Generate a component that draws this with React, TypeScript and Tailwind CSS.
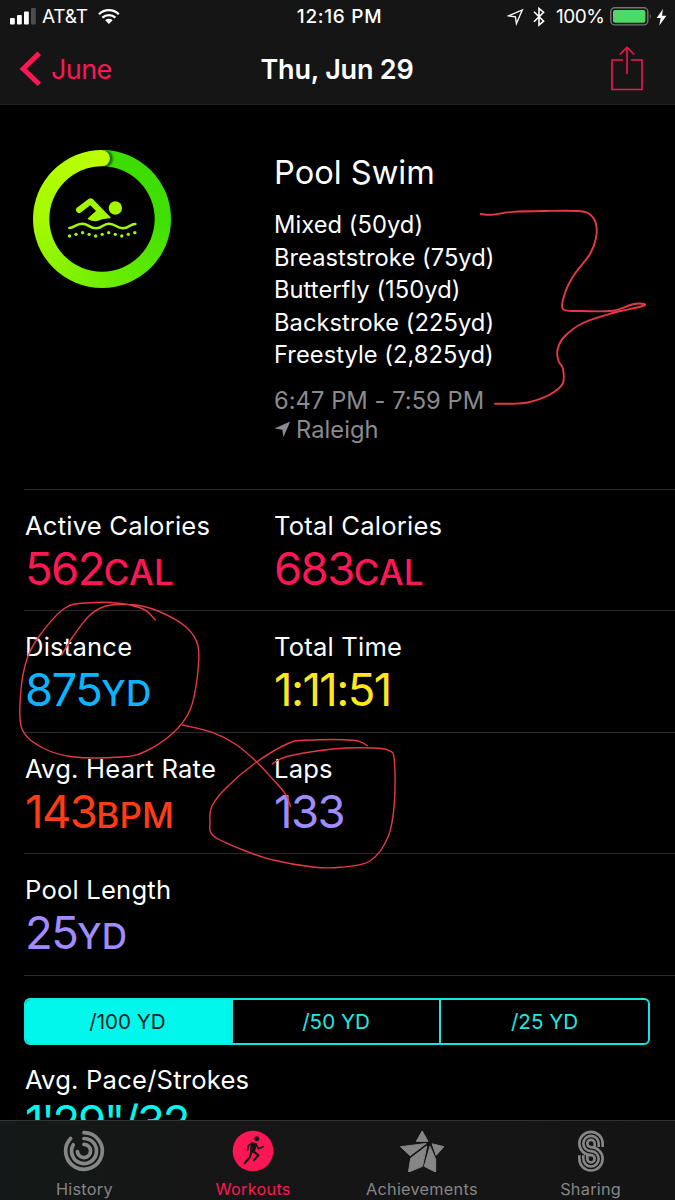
type Point = [number, number];

const strokes = [
  { name: "Mixed", yards: "50" },
  { name: "Breaststroke", yards: "75" },
  { name: "Butterfly", yards: "150" },
  { name: "Backstroke", yards: "225" },
  { name: "Freestyle", yards: "2,825" },
];

const rows = [
  [
    { label: "Active Calories", value: "562", unit: "CAL", color: "text-[#ff1654]" },
    { label: "Total Calories", value: "683", unit: "CAL", color: "text-[#ff1654]" },
  ],
  [
    { label: "Distance", value: "875", unit: "YD", color: "text-[#0ab4ff]" },
    { label: "Total Time", value: "1:11:51", unit: "", color: "text-[#ffe620]" },
  ],
  [
    { label: "Avg. Heart Rate", value: "143", unit: "BPM", color: "text-[#ff3c14]" },
    { label: "Laps", value: "133", unit: "", color: "text-[#a08cff]" },
  ],
  [{ label: "Pool Length", value: "25", unit: "YD", color: "text-[#a08cff]" }],
];

// freehand marker lines drawn over the page
const bracket: Point[] = [
  [480.7, 214], [491.7, 214.7], [513, 211.9], [545, 211], [578, 211], [590, 214.5], [596, 224],
  [596, 238], [590, 254], [574, 275], [565, 293], [562.9, 309], [580, 311], [613, 310.7],
  [632, 304.5], [644, 304], [641, 306.5], [613, 313], [583, 323], [564, 337], [557.5, 350],
  [558.5, 361], [563, 369], [562.5, 384], [549, 395], [528, 402.5], [512, 403.7], [495, 403.7],
];
const distanceLoop: Point[] = [
  [61.7, 655], [72, 638], [89, 616], [106, 606], [133, 604.8], [158, 611], [186, 627],
  [198, 646], [197.3, 677], [190, 710], [173, 733], [144, 752], [121, 757], [74, 757],
  [43, 748], [22, 729], [20.7, 693], [27, 659], [40, 635], [65, 608], [90, 602.7],
  [121, 603.5], [144, 609.5], [155.3, 620],
];
const connector: Point[] = [
  [182.7, 725], [213, 732.7], [236, 744.5], [256.7, 762], [278, 785], [286, 795], [290.7, 806.7],
];
const lapsLoop: Point[] = [
  [272.3, 764], [287, 756.5], [333, 749], [373, 748], [389, 750.5], [394.3, 760], [394.3, 804],
  [388, 837], [370, 861], [340, 867.3], [313, 867], [273, 860], [243, 850], [213.5, 836],
  [210, 822], [212, 806], [227, 787], [256.7, 762], [288, 743.5], [306, 740.3], [353, 740.3],
  [367.3, 745.7],
];

function smooth(pts: Point[]) {
  let d = `M${pts[0][0]} ${pts[0][1]}`;
  for (let i = 0; i < pts.length - 1; i++) {
    const p0 = pts[i - 1] ?? pts[i];
    const p1 = pts[i];
    const p2 = pts[i + 1];
    const p3 = pts[i + 2] ?? p2;
    d += `C${p1[0] + (p2[0] - p0[0]) / 6} ${p1[1] + (p2[1] - p0[1]) / 6} ${
      p2[0] - (p3[0] - p1[0]) / 6
    } ${p2[1] - (p3[1] - p1[1]) / 6} ${p2[0]} ${p2[1]}`;
  }
  return d;
}

function StatusBar() {
  return (
    <div className="flex h-[34px] items-center justify-between pl-[10px] pr-[8px] text-[19px]">
      <div className="flex w-[200px] items-center">
        <svg width="26" height="34" fill="#fff">
          <rect x="0" y="18" width="4.8" height="6.5" rx="1" />
          <rect x="7" y="15" width="4.8" height="9.5" rx="1" />
          <rect x="14" y="11.5" width="4.8" height="13" rx="1" />
          <rect x="21" y="8" width="4.8" height="16.5" rx="1" fill="#4c4c4c" />
        </svg>
        <span className="ml-[6px] w-[56px] pt-px tracking-[-0.2px]">AT&amp;T</span>
        <svg width="22" height="34" viewBox="0 0 22 34" fill="none" stroke="#fff" strokeWidth="2.3">
          <path d="M1 14.2A14.2 14.2 0 0 1 20.8 14.2" />
          <path d="M4.4 17.7A9.4 9.4 0 0 1 17.4 17.7" />
          <path d="M7.2 20.3A5.4 5.4 0 0 1 14.6 20.3L10.9 24Z" fill="#fff" stroke="none" />
        </svg>
      </div>
      <span className="ml-[2px] pt-px font-medium tracking-[0.7px]">12:16 PM</span>
      <div className="flex w-[200px] items-center justify-end">
        <svg width="17" height="34" viewBox="0 0 17 34" fill="none" stroke="#fff" strokeWidth="1.3">
          <path d="M1.5 15.8L15.3 9.9L9.4 23.6L8.4 16.8Z" />
        </svg>
        <svg className="ml-[9px]" width="12" height="34" viewBox="0 0 12 34" fill="none" stroke="#fff" strokeWidth="1.6">
          <path d="M1 11.8L10.6 21.2L6 25V8.5L10.6 12.3L1 21.8" />
        </svg>
        <span className="ml-[11px] w-[54px] pt-px tracking-[-0.5px]">100%</span>
        <svg width="43" height="34" viewBox="0 0 43 34">
          <rect x="0.8" y="7.7" width="37" height="17.2" rx="4" fill="none" stroke="#747474" strokeWidth="1.4" />
          <rect x="3" y="10" width="32.4" height="12.7" rx="2" fill="#4cd964" />
          <path d="M39.8 13.5q2 2.8 0 5.6z" fill="#747474" />
        </svg>
        <svg className="ml-[3px]" width="11" height="34" viewBox="0 0 11 34" fill="#fff">
          <path d="M7 9L0.6 18H4.6L3.3 25.5L10.4 15.7H6Z" />
        </svg>
      </div>
    </div>
  );
}

function Header() {
  return (
    <header className="h-[105px] border-b border-[#222] bg-[#151515]">
      <StatusBar />
      <div className="flex h-[70px] items-center justify-between pl-[20px] pr-[31px] text-[27px]">
        <div className="flex w-[150px] items-center text-[#ff1654]">
          <svg width="22" height="70" viewBox="0 0 22 70" fill="none" stroke="currentColor" strokeWidth="5">
            <path d="M19.2 19.4L3.2 34.8L19.2 50.2" />
          </svg>
          <span className="ml-[9px] pt-[2px] tracking-[-0.6px]">June</span>
        </div>
        <span className="ml-[10px] pt-[2px] font-semibold tracking-[-0.2px]">Thu, Jun 29</span>
        <div className="flex w-[150px] justify-end">
          <svg width="34" height="70" viewBox="0 0 34 70" fill="none" stroke="#f01850" strokeWidth="1.6">
            <path d="M13 26H2V55.5H32V26H21" />
            <path d="M17 40V13.5M9.8 20.5L17 13.3L24.2 20.5" />
          </svg>
        </div>
      </div>
    </header>
  );
}

function WorkoutRing() {
  return (
    <div className="ml-[33px] size-[138px] rounded-full bg-[conic-gradient(#3ddc00,#3fe000_25%,#70ee00_50%,#a5fa00_75%,#bcff00)]">
      <svg width="138" height="138" viewBox="39 30 414 414">
        <defs>
          <radialGradient id="capShade">
            <stop offset="0.7" stopColor="#0a5000" stopOpacity="0.8" />
            <stop offset="1" stopColor="#0a5000" stopOpacity="0" />
          </radialGradient>
          <clipPath id="ringClip">
            <path d="M246 31a206 206 0 0 1 90 20v129h-90z" />
          </clipPath>
        </defs>
        <circle cx="251" cy="56" r="32" fill="url(#capShade)" clipPath="url(#ringClip)" />
        <circle cx="246" cy="55" r="24" fill="#bcff00" />
        <circle cx="246" cy="237" r="158" fill="#000" />
        <g fill="#a4f800" stroke="#a4f800" strokeLinecap="round" strokeLinejoin="round">
          <circle cx="286" cy="204" r="20" stroke="none" />
          <path d="M177 210L211 184" strokeWidth="18" fill="none" />
          <path d="M216 178L270 233Q248 234 238 239Q222 245 205 236L231 213L210 192Z" strokeWidth="4" />
          <path d="M148 264C163 264 166 251 187 251C205 251 208 265 228 265C247 265 248 251 267 251C287 251 289 265 308 265C328 265 329 252 346 252" fill="none" strokeWidth="7.5" />
        </g>
        <g fill="#a4f800">
          {[288, 283, 278, 283, 288, 283, 278, 283, 288, 283, 278].map((y, i) => (
            <circle key={i} cx={148.5 + i * 19.6} cy={y} r="5" />
          ))}
        </g>
      </svg>
    </div>
  );
}

function Metric({ label, value, unit, color }: { label: string; value: string; unit: string; color: string }) {
  return (
    <div className="pt-5">
      <div className="text-[25.6px] leading-8 tracking-[0.2px]">{label}</div>
      <div className={`mt-[3px] text-[45.5px] leading-[48px] tracking-[-1.6px] ${color}`}>
        {value}
        <span className="text-[35px] font-medium tracking-[0.2px]">{unit}</span>
      </div>
    </div>
  );
}

function HistoryIcon() {
  return (
    <svg width="42" height="42" viewBox="-21 -21 42 42" fill="none" stroke="currentColor" strokeWidth="3.7" strokeLinecap="round">
      <path d="M0 -18.3A18.3 18.3 0 1 1 -13.4 -12.5" />
      <path d="M0 -12.5A12.5 12.5 0 1 1 -10.8 -6.2" />
      <path d="M0 -6.6A6.6 6.6 0 1 1 -6.6 0.5" />
    </svg>
  );
}

function WorkoutsIcon() {
  return (
    <svg width="42" height="42" viewBox="22.5 24 126 126">
      <circle cx="85.5" cy="87" r="61" fill="#ff1654" />
      <g fill="none" stroke="#151515" strokeWidth="6.5" strokeLinecap="round" strokeLinejoin="round">
        <circle cx="97" cy="50" r="7.5" fill="#151515" stroke="none" />
        <path d="M82 64L94 66L88 90L80 86Z" fill="#151515" />
        <path d="M82 64L72 71L69 84" strokeWidth="5" />
        <path d="M94 66L102 80L116 74" strokeWidth="5" />
        <path d="M86 88L102 100L88 115" />
        <path d="M81 88L76 106L61 123" />
      </g>
    </svg>
  );
}

function AchievementsIcon() {
  return (
    <svg width="44" height="42" viewBox="195.5 451 132 126" fill="currentColor" stroke="currentColor" strokeWidth="3" strokeLinejoin="round">
      <path d="M262 454L244.5 485H279.5Z" />
      <path d="M197 501L274 491.5L226 528Z" />
      <path d="M276 499L227.5 536L221 577.5L263 560Z" />
      <path d="M285.5 500L302.5 539V577.5L268.5 560Z" />
      <path d="M292 492.5L327 501L304 527Z" />
    </svg>
  );
}

function SharingIcon() {
  return (
    <svg width="42" height="42" viewBox="28 24 126 126" fill="none" stroke="currentColor" strokeWidth="8">
      {[35, 23, 11].map((r) => {
        const q = 46 - r;
        return (
          <path
            key={r}
            d={`M${91 + r} 75V64.5A${r} ${r} 0 1 0 91 ${64.5 + r}A${q} ${q} 0 1 1 ${91 - q} 110.5V100`}
          />
        );
      })}
    </svg>
  );
}

const tabs = [
  { label: "History", icon: <HistoryIcon />, color: "text-[#868686]" },
  { label: "Workouts", icon: <WorkoutsIcon />, color: "text-[#ff1654]" },
  { label: "Achievements", icon: <AchievementsIcon />, color: "text-[#868686]" },
  { label: "Sharing", icon: <SharingIcon />, color: "text-[#868686]" },
];

export default function App() {
  return (
    <div className="relative h-[1200px] w-[675px] overflow-hidden bg-black font-['Inter',sans-serif] text-white">
      <Header />

      <main className="h-[1015px] overflow-hidden">
        <section className="flex h-[384px] pt-[45px]">
          <WorkoutRing />
          <div className="ml-[103px] pt-[2px]">
            <h1 className="text-[32.6px] leading-10">Pool Swim</h1>
            <ul className="mt-[17px] text-[23.7px] leading-[32.6px] tracking-[0.05px]">
              {strokes.map((s) => (
                <li key={s.name}>
                  {s.name} ({s.yards}yd)
                </li>
              ))}
            </ul>
            <div className="mt-[14px] text-[23.7px] leading-[29.3px] tracking-[0.05px] text-[#8a8a8f]">
              <div>6:47 PM - 7:59 PM</div>
              <div className="flex items-center">
                <svg width="17" height="17" viewBox="0 0 17 17" fill="currentColor">
                  <path d="M0.5 7.5L16.2 0.5L9.4 16.3L8.3 8.7Z" />
                </svg>
                <span className="ml-[5px]">Raleigh</span>
              </div>
            </div>
          </div>
        </section>

        {rows.map((row, i) => (
          <section key={i} className="ml-6 grid h-[121.4px] grid-cols-[249px_1fr] border-t border-[#2a2a2a] pl-px">
            {row.map((m) => (
              <Metric key={m.label} {...m} />
            ))}
          </section>
        ))}

        <section className="ml-6 border-t border-[#2a2a2a] pt-[22px]">
          <div className="grid h-[47px] w-[626px] grid-cols-[207px_208px_1fr] divide-x-2 divide-[#22e0dc] overflow-hidden rounded-[6px] border-2 border-[#10e8e2] text-center text-[20.6px] leading-[44px] text-[#22e8e2]">
            <div className="bg-[#00f8ec] pr-[2px] text-[#0c1c1c]">/100 YD</div>
            <div>/50 YD</div>
            <div>/25 YD</div>
          </div>
          <div className="mt-[19px] pl-px text-[25.6px] leading-8 tracking-[0.2px]">Avg. Pace/Strokes</div>
          <div className="mt-[2px] pl-px text-[45.5px] leading-[48px] tracking-[-2.3px] text-[#00f8ec]">1'29"/32</div>
        </section>
      </main>

      <nav className="grid h-20 grid-cols-4 border-t border-[#343434] bg-linear-to-r from-[#131918] via-[#161616] via-30% to-[#141414]">
        {tabs.map((t) => (
          <div key={t.label} className={`flex flex-col items-center pt-[9px] ${t.color}`}>
            {t.icon}
            <span className="mt-[7px] text-[16.3px] leading-5 tracking-[0.25px]">{t.label}</span>
          </div>
        ))}
      </nav>

      <svg className="pointer-events-none absolute inset-0" width="675" height="1200" fill="none" stroke="#e63946" strokeWidth="1.4" strokeLinecap="round">
        <path d={smooth(bracket)} strokeWidth="1.9" />
        <path d={smooth(distanceLoop)} />
        <path d={smooth(connector)} />
        <path d={smooth(lapsLoop)} />
      </svg>
    </div>
  );
}
